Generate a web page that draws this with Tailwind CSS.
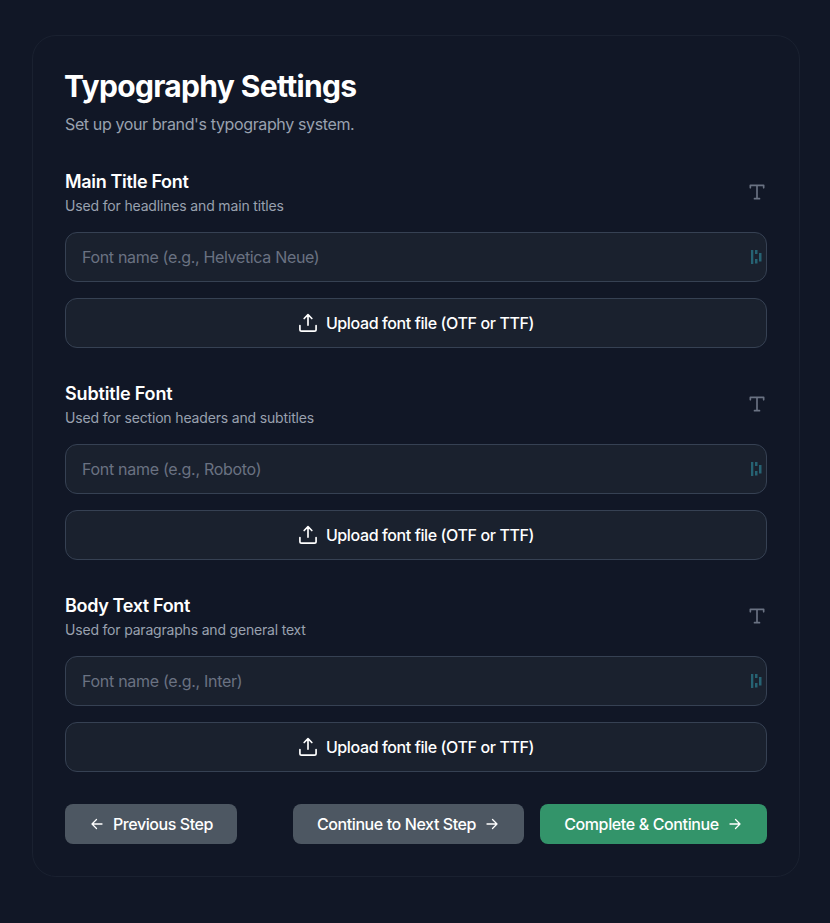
<!DOCTYPE html>
<html lang="en">
<head>
<meta charset="utf-8">
<title>Typography Settings</title>
<script src="https://cdn.jsdelivr.net/npm/@tailwindcss/browser@4"></script>
</head>
<body class="bg-[#111726] font-['Inter',sans-serif] text-white">
<svg class="hidden">
  <symbol id="type" viewBox="0 0 24 24"><path d="M4 7V4h16v3M9 20h6M12 4v16"/></symbol>
  <symbol id="upload" viewBox="0 0 24 24"><path d="M2.300 15v4.700A2 2 0 0 0 4.300 21.700h15.400a2 2 0 0 0 2-2V15M7.400 6.600 12 2l4.600 4.600M12 2v12.700"/></symbol>
  <symbol id="left" viewBox="0 0 16 16"><path d="M13 8H3M7.500 3.500 3 8l4.500 4.500"/></symbol>
  <symbol id="right" viewBox="0 0 16 16"><path d="M3 8h10M8.500 3.500 13 8l-4.500 4.500"/></symbol>
  <symbol id="manager" viewBox="0 0 12 16"><path d="M1 1h2.300v14H1zM5 1h2.500v4H5zM5 10h2.500v4.500H5zM9 4h2.500v8.500H9z"/></symbol>
</svg>
<main class="mx-auto mt-[35px] h-[842px] w-[768px] translate-x-px rounded-3xl border border-[#1a2130] p-8">
  <h1 class="-ml-px text-3xl leading-9 font-bold tracking-[-0.66px]">Typography Settings</h1>
  <p class="mt-2 mb-8 text-base tracking-[-0.37px] text-gray-400">Set up your brand's typography system.</p>
  <div class="space-y-8">
    <section>
      <div class="mb-4 flex items-center justify-between">
        <div>
          <h2 class="text-lg leading-7 font-semibold tracking-[-0.33px]">Main Title Font</h2>
          <p class="text-sm leading-5 tracking-[-0.16px] text-gray-400">Used for headlines and main titles</p>
        </div>
        <svg class="size-5 fill-none stroke-gray-500 stroke-2" stroke-linecap="round" stroke-linejoin="round"><use href="#type"/></svg>
      </div>
      <div class="flex h-[50px] items-center justify-between rounded-xl border border-gray-700 bg-[#1a212e] pr-1 pl-4 tracking-[-0.33px] text-gray-500"><span>Font name (e.g., Helvetica Neue)</span><svg class="h-4 w-3 fill-[#266373]"><use href="#manager"/></svg></div>
      <button class="mt-4 flex h-[50px] w-full items-center justify-center gap-2 rounded-xl border border-gray-700 bg-[#1a212e] font-medium tracking-[-0.39px]"><svg class="size-5 fill-none stroke-white stroke-2" stroke-linecap="round" stroke-linejoin="round"><use href="#upload"/></svg><span>Upload font file (OTF or TTF)</span></button>
    </section>
    <section>
      <div class="mb-4 flex items-center justify-between">
        <div>
          <h2 class="text-lg leading-7 font-semibold tracking-[-0.17px]">Subtitle Font</h2>
          <p class="text-sm leading-5 tracking-[-0.16px] text-gray-400">Used for section headers and subtitles</p>
        </div>
        <svg class="size-5 fill-none stroke-gray-500 stroke-2" stroke-linecap="round" stroke-linejoin="round"><use href="#type"/></svg>
      </div>
      <div class="flex h-[50px] items-center justify-between rounded-xl border border-gray-700 bg-[#1a212e] pr-1 pl-4 tracking-[-0.3px] text-gray-500"><span>Font name (e.g., Roboto)</span><svg class="h-4 w-3 fill-[#266373]"><use href="#manager"/></svg></div>
      <button class="mt-4 flex h-[50px] w-full items-center justify-center gap-2 rounded-xl border border-gray-700 bg-[#1a212e] font-medium tracking-[-0.39px]"><svg class="size-5 fill-none stroke-white stroke-2" stroke-linecap="round" stroke-linejoin="round"><use href="#upload"/></svg><span>Upload font file (OTF or TTF)</span></button>
    </section>
    <section>
      <div class="mb-4 flex items-center justify-between">
        <div>
          <h2 class="text-lg leading-7 font-semibold tracking-[-0.35px]">Body Text Font</h2>
          <p class="text-sm leading-5 tracking-[-0.19px] text-gray-400">Used for paragraphs and general text</p>
        </div>
        <svg class="size-5 fill-none stroke-gray-500 stroke-2" stroke-linecap="round" stroke-linejoin="round"><use href="#type"/></svg>
      </div>
      <div class="flex h-[50px] items-center justify-between rounded-xl border border-gray-700 bg-[#1a212e] pr-1 pl-4 tracking-[-0.29px] text-gray-500"><span>Font name (e.g., Inter)</span><svg class="h-4 w-3 fill-[#266373]"><use href="#manager"/></svg></div>
      <button class="mt-4 flex h-[50px] w-full items-center justify-center gap-2 rounded-xl border border-gray-700 bg-[#1a212e] font-medium tracking-[-0.39px]"><svg class="size-5 fill-none stroke-white stroke-2" stroke-linecap="round" stroke-linejoin="round"><use href="#upload"/></svg><span>Upload font file (OTF or TTF)</span></button>
    </section>
  </div>
  <div class="mt-8 flex gap-4 font-medium">
    <button class="mr-auto flex h-10 w-[172px] items-center justify-center gap-2 rounded-lg bg-[#4d5762] tracking-[-0.43px]"><svg class="size-4 fill-none stroke-white stroke-[1.3]" stroke-linecap="round" stroke-linejoin="round"><use href="#left"/></svg><span>Previous Step</span></button>
    <button class="flex h-10 w-[231px] items-center justify-center gap-2 rounded-lg bg-[#4d5762] tracking-[-0.4px]"><span>Continue to Next Step</span><svg class="size-4 fill-none stroke-white stroke-[1.3]" stroke-linecap="round" stroke-linejoin="round"><use href="#right"/></svg></button>
    <button class="flex h-10 w-[227px] items-center justify-center gap-2 rounded-lg bg-[#33946a] tracking-[-0.37px]"><span>Complete &amp; Continue</span><svg class="size-4 fill-none stroke-white stroke-[1.3]" stroke-linecap="round" stroke-linejoin="round"><use href="#right"/></svg></button>
  </div>
</main>
</body>
</html>
